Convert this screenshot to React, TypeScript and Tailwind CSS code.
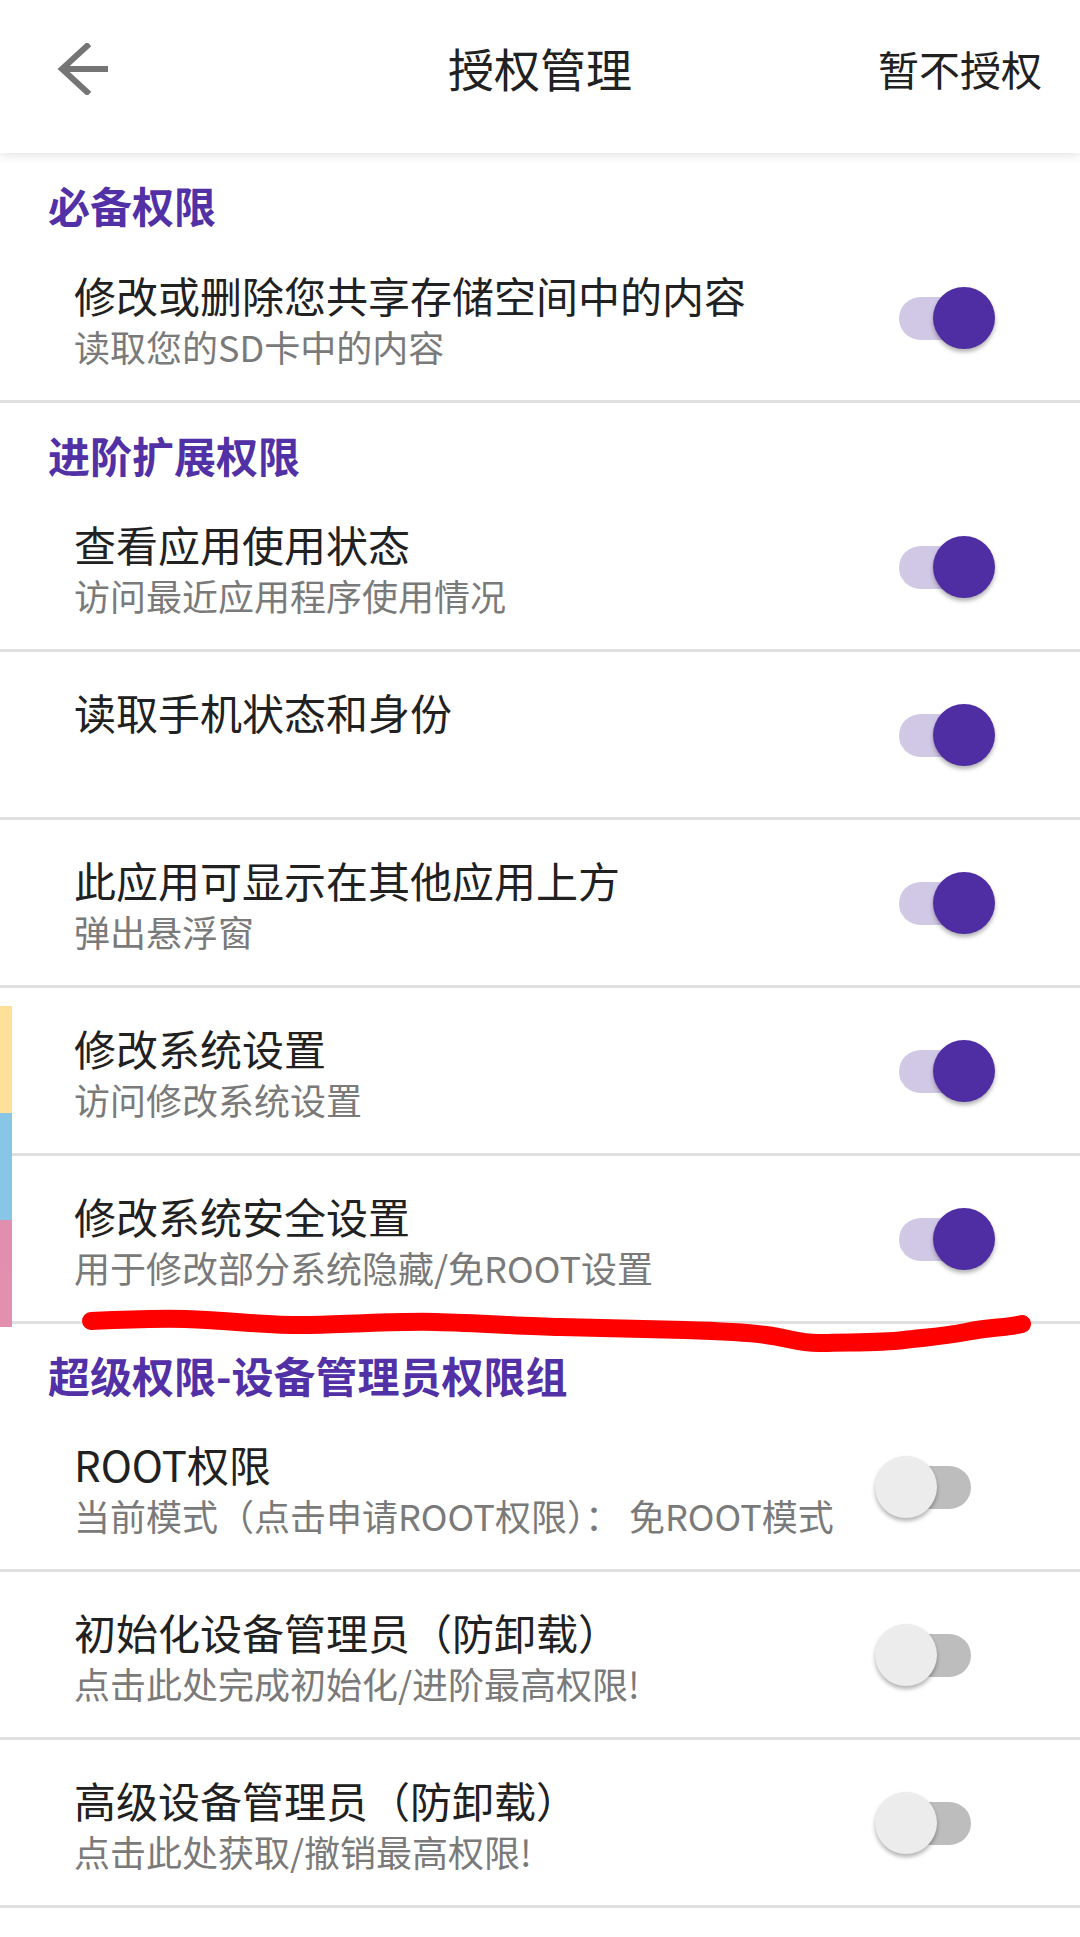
import React from "react";

const font = { fontFamily: '"Noto Sans CJK SC", "Noto Sans", sans-serif' };

function Toggle({ on }: { on: boolean }) {
  return (
    <div className="relative w-[120px] h-[62px] shrink-0">
      <div
        className={
          "absolute left-[24px] top-[10px] w-[72px] h-[43px] rounded-full " +
          (on ? "bg-[#d1c8e6]" : "bg-[#bdbdbd]")
        }
      />
      <div
        className={
          "absolute top-0 w-[62px] h-[62px] rounded-full shadow-[0_3px_4px_rgba(0,0,0,0.3)] " +
          (on ? "left-[58px] bg-[#4f2ea3]" : "left-0 bg-[#ececec]")
        }
      />
    </div>
  );
}

function Row({ title, sub, on }: { title: string; sub?: string; on: boolean }) {
  return (
    <div className="flex flex-col">
      <div className="h-[165px] flex items-start justify-between pl-[74px] pr-[85px]">
        <div className="flex flex-col pt-[34px]">
          <div className="text-[42px] leading-[52px] text-[#212121]">{title}</div>
          {sub ? (
            <div className="text-[36px] leading-[50px] text-[#7a7a7a]">{sub}</div>
          ) : null}
        </div>
        <div className="mt-[52px]">
          <Toggle on={on} />
        </div>
      </div>
      <div className="h-[3px] bg-[#e0e0e0]" />
    </div>
  );
}

function Section({ title, h }: { title: string; h: string }) {
  return (
    <div className={"flex items-center pl-[48px] pt-[22px] " + h}>
      <div className="text-[42px] leading-[52px] font-bold text-[#5230a6]">{title}</div>
    </div>
  );
}

export default function App() {
  return (
    <div className="relative w-[1080px] h-[1937px] bg-white overflow-hidden" style={font}>
      <div className="relative z-10 h-[153px] bg-white flex items-center shadow-[0_2px_10px_rgba(0,0,0,0.12)]">
        <div className="absolute left-[57px] top-[43px] w-[54px] h-[52px]">
          <svg width="54" height="52" viewBox="0 0 54 52" fill="none">
            <path d="M5 26 H51" stroke="#757575" strokeWidth="6" />
            <path d="M30 3 L5 26 L30 49" stroke="#757575" strokeWidth="6" strokeLinecap="square" />
          </svg>
        </div>
        <div className="flex-1 text-center text-[46px] leading-[56px] text-[#212121] pb-[20px]">授权管理</div>
        <div className="absolute right-[38px] top-[40px] text-[41px] leading-[56px] text-[#212121]">暂不授权</div>
      </div>

      <Section title="必备权限" h="h-[82px]" />
      <Row title="修改或删除您共享存储空间中的内容" sub="读取您的SD卡中的内容" on />

      <Section title="进阶扩展权限" h="h-[81px]" />
      <Row title="查看应用使用状态" sub="访问最近应用程序使用情况" on />
      <Row title="读取手机状态和身份" on />
      <Row title="此应用可显示在其他应用上方" sub="弹出悬浮窗" on />
      <Row title="修改系统设置" sub="访问修改系统设置" on />
      <Row title="修改系统安全设置" sub="用于修改部分系统隐藏/免ROOT设置" on />

      <Section title="超级权限-设备管理员权限组" h="h-[80px]" />
      <Row title="ROOT权限" sub="当前模式（点击申请ROOT权限）： 免ROOT模式" on={false} />
      <Row title="初始化设备管理员（防卸载）" sub="点击此处完成初始化/进阶最高权限!" on={false} />
      <Row title="高级设备管理员（防卸载）" sub="点击此处获取/撤销最高权限!" on={false} />

      {/* left edge colour strip overlay */}
      <div className="absolute left-0 top-[1006px] w-[12px] flex flex-col opacity-95">
        <div className="h-[107px] bg-[#fddf94]" />
        <div className="h-[107px] bg-[#82c4e6]" />
        <div className="h-[107px] bg-[#e08aaa]" />
      </div>

      {/* red hand-drawn annotation */}
      <svg className="absolute left-0 top-[1290px]" width="1080" height="80" viewBox="0 1290 1080 80">
        <path
          d="M91 1321 C140 1319 160 1318 185 1319 C240 1321 270 1326 310 1325 C360 1324 400 1321 435 1322 C480 1323 520 1326 560 1327 C610 1328 650 1329 685 1330 C720 1331 745 1332 766 1335 C790 1338 800 1344 822 1343 C850 1342 880 1343 904 1340 C930 1337 945 1336 966 1332 C990 1327 1005 1328 1022 1324"
          stroke="#ff0000"
          strokeWidth="18"
          strokeLinecap="round"
          strokeLinejoin="round"
          fill="none"
        />
      </svg>
    </div>
  );
}
